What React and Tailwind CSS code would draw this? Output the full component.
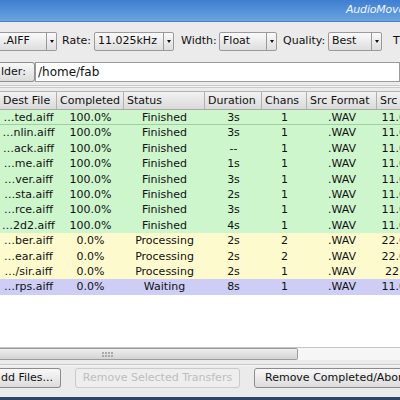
import React from 'react';

const font = { fontFamily: '"DejaVu Sans", Verdana, sans-serif' };

// column widths in px, the last one runs off the window edge
const columns = [
    { title: 'Dest File', w: 'w-[57px]' },
    { title: 'Completed', w: 'w-[67px]' },
    { title: 'Status', w: 'w-[81px]' },
    { title: 'Duration', w: 'w-[57px]' },
    { title: 'Chans', w: 'w-[45px]' },
    { title: 'Src Format', w: 'w-[70px]' },
    { title: 'Src Rate', w: 'w-[68px]' },
];

const transfers = [
    ['…ted.aiff', '100.0%', 'Finished', '3s', '1', '.WAV', '11.025kHz', 'done'],
    ['…nlin.aiff', '100.0%', 'Finished', '3s', '1', '.WAV', '11.025kHz', 'done'],
    ['…ack.aiff', '100.0%', 'Finished', '--', '1', '.WAV', '11.025kHz', 'done'],
    ['…me.aiff', '100.0%', 'Finished', '1s', '1', '.WAV', '11.025kHz', 'done'],
    ['…ver.aiff', '100.0%', 'Finished', '3s', '1', '.WAV', '11.025kHz', 'done'],
    ['…sta.aiff', '100.0%', 'Finished', '2s', '1', '.WAV', '11.025kHz', 'done'],
    ['…rce.aiff', '100.0%', 'Finished', '3s', '1', '.WAV', '11.025kHz', 'done'],
    ['…2d2.aiff', '100.0%', 'Finished', '4s', '1', '.WAV', '11.025kHz', 'done'],
    ['…ber.aiff', '0.0%', 'Processing', '2s', '2', '.WAV', '22.050kHz', 'busy'],
    ['…ear.aiff', '0.0%', 'Processing', '2s', '2', '.WAV', '22.050kHz', 'busy'],
    ['…/sir.aiff', '0.0%', 'Processing', '2s', '1', '.WAV', '22.05kHz', 'busy'],
    ['…rps.aiff', '0.0%', 'Waiting', '8s', '1', '.WAV', '11.025kHz', 'wait'],
];

const rowBg = {
    done: 'bg-[#cdf6cd]',
    busy: 'bg-[#fdfbcd]',
    wait: 'bg-[#cdcdf6]',
};

const Combo = ({ value, w, noLeft }) => (
    <div
        className={`flex h-[19px] ${w} shrink-0 items-stretch rounded-[2px] border border-[#9a9a9a] bg-gradient-to-b from-[#fafafa] to-[#dedede] ${noLeft ? 'border-l-0 rounded-l-none' : ''}`}
    >
        <div className="flex flex-1 items-center pl-[3px] text-[11px] text-[#111]">{value}</div>
        <div className="flex w-[10px] items-center justify-center border-l border-[#9a9a9a]">
            <div className="h-0 w-0 border-x-[2.5px] border-t-[3px] border-x-transparent border-t-[#111]" />
        </div>
    </div>
);

export default function App() {
    return (
        <div className="flex h-[400px] w-[400px] flex-col overflow-hidden bg-[#ebebeb] text-[11px] text-[#111]" style={font}>
            {/* title bar */}
            <div className="flex h-[22px] shrink-0 items-center border-b border-[#4d7fb8] bg-gradient-to-b from-[#3e7ed0] to-[#6aa4e2]">
                <span className="ml-[346px] whitespace-nowrap text-[11px] italic tracking-[-0.2px] text-[#f0f5ff]">AudioMove</span>
            </div>

            {/* format options */}
            <div className="mt-[10px] flex h-[19px] shrink-0 items-center whitespace-nowrap">
                <Combo value=".AIFF" w="w-[57px]" noLeft />
                <span className="w-[37px] shrink-0 pl-[5px]">Rate:</span>
                <Combo value="11.025kHz" w="w-[80px]" />
                <span className="w-[45px] shrink-0 pl-[7px]">Width:</span>
                <Combo value="Float" w="w-[58px]" />
                <span className="w-[51px] shrink-0 pl-[6px]">Quality:</span>
                <Combo value="Best" w="w-[54px]" />
                <span className="shrink-0 pl-[11px]">T</span>
            </div>

            {/* destination folder */}
            <div className="mt-[11px] flex h-[20px] shrink-0 items-stretch">
                <div className="flex w-[35px] shrink-0 items-center rounded-r-[3px] border border-l-0 border-[#8f8f8f] bg-gradient-to-b from-[#f8f8f8] to-[#dcdcdc] pl-[1px]">
                    lder:
                </div>
                <div className="flex flex-1 items-center border border-[#9b9b9b] bg-white pl-[2px] text-[12px]">/home/fab</div>
            </div>

            <div className="mt-[3px] h-[3px] shrink-0 border-y border-[#c9c9c9] bg-[#f4f4f4]" />

            {/* transfers table */}
            <div className="mt-[3px] flex h-[269px] shrink-0 flex-col overflow-hidden border-t border-[#b5b5b5] bg-white">
                <div className="flex h-[18px] shrink-0 whitespace-nowrap border-b border-[#a8a8a8] bg-gradient-to-b from-[#f2f2f2] to-[#dadada]">
                    {columns.map((c) => (
                        <div key={c.title} className={`${c.w} shrink-0 border-r border-[#b0b0b0] pl-[3px] leading-[17px]`}>
                            {c.title}
                        </div>
                    ))}
                </div>
                {transfers.map((t, i) => (
                    <div
                        key={i}
                        className={`flex h-[15.4px] shrink-0 whitespace-nowrap ${rowBg[t[7]]} ${i === 0 ? 'border-b border-[#9fcf9f]' : ''}`}
                    >
                        {columns.map((c, j) => (
                            <div key={c.title} className={`${c.w} shrink-0 overflow-hidden text-center leading-[15px]`}>
                                {t[j]}
                            </div>
                        ))}
                    </div>
                ))}
                <div className="flex-1" />
                {/* horizontal scrollbar */}
                <div className="flex h-[13px] shrink-0 items-stretch border-t border-[#c4c4c4] bg-[#f6f6f6]">
                    <div className="flex w-[298px] items-center rounded-r-[2px] border border-l-0 border-[#9c9c9c] bg-gradient-to-b from-[#eeeeee] to-[#d4d4d4]">
                        <div className="ml-[102px] grid grid-cols-4 gap-[1px]">
                            {Array.from({ length: 8 }).map((_, k) => (
                                <div key={k} className="h-[2px] w-[2px] bg-[#a9a9a9]" />
                            ))}
                        </div>
                    </div>
                </div>
            </div>

            <div className="mt-[4px] h-[2px] shrink-0 border-t border-[#c8c8c8] bg-[#f5f5f5]" />

            {/* actions */}
            <div className="mt-[2px] flex h-[20px] shrink-0 items-stretch whitespace-nowrap">
                <div className="flex w-[61px] shrink-0 items-center rounded-r-[3px] border border-l-0 border-[#8c8c8c] bg-gradient-to-b from-[#f8f8f8] to-[#dcdcdc] pl-[1px]">
                    dd Files...
                </div>
                <div className="ml-[14px] flex w-[165px] shrink-0 items-center justify-center rounded-[3px] border border-[#cacaca] bg-[#eeeeee] text-[#bdbdbd]">
                    Remove Selected Transfers
                </div>
                <div className="ml-[14px] flex w-[170px] shrink-0 items-center rounded-[3px] border border-[#8c8c8c] bg-gradient-to-b from-[#f8f8f8] to-[#dcdcdc] pl-[10px]">
                    Remove Completed/Aborted
                </div>
            </div>

            <div className="flex-1" />
            <div className="h-[3px] shrink-0 bg-[#2e4566]" />
        </div>
    );
}
